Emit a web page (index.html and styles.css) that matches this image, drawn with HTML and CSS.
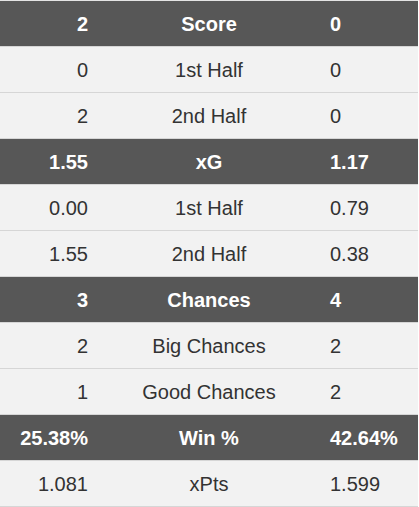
FILE: index.html
```html
<!DOCTYPE html>
<html>
<head>
<meta charset="utf-8">
<link rel="stylesheet" href="styles.css">
</head>
<body>
<table class="stats">
  <tr class="head"><td class="l">2</td><td class="m">Score</td><td class="r">0</td></tr>
  <tr class="row"><td class="l">0</td><td class="m">1st Half</td><td class="r">0</td></tr>
  <tr class="row"><td class="l">2</td><td class="m">2nd Half</td><td class="r">0</td></tr>
  <tr class="head"><td class="l">1.55</td><td class="m">xG</td><td class="r">1.17</td></tr>
  <tr class="row"><td class="l">0.00</td><td class="m">1st Half</td><td class="r">0.79</td></tr>
  <tr class="row"><td class="l">1.55</td><td class="m">2nd Half</td><td class="r">0.38</td></tr>
  <tr class="head"><td class="l">3</td><td class="m">Chances</td><td class="r">4</td></tr>
  <tr class="row"><td class="l">2</td><td class="m">Big Chances</td><td class="r">2</td></tr>
  <tr class="row"><td class="l">1</td><td class="m">Good Chances</td><td class="r">2</td></tr>
  <tr class="head"><td class="l">25.38%</td><td class="m">Win %</td><td class="r">42.64%</td></tr>
  <tr class="row"><td class="l">1.081</td><td class="m">xPts</td><td class="r">1.599</td></tr>
</table>
</body>
</html>
```
FILE: styles.css
```css
html, body {
  margin: 0;
  padding: 0;
  background: #ffffff;
}
.stats {
  width: 418px;
  border-collapse: collapse;
  border-top: 1px solid #e4e4e4;
  font-family: "Liberation Sans", Arial, sans-serif;
  font-size: 20px;
  table-layout: fixed;
}
.stats td {
  height: 44px;
  padding: 1px 0 0 0;
  border-bottom: 1px solid #d6d6d6;
  vertical-align: middle;
  white-space: nowrap;
}
.stats .l {
  width: 100px;
  text-align: right;
  padding-right: 12px;
  box-sizing: border-box;
}
.stats .m {
  text-align: center;
}
.stats .r {
  width: 100px;
  text-align: left;
  padding-left: 12px;
  box-sizing: border-box;
}
.head td {
  background: #575757;
  color: #ffffff;
  font-weight: bold;
}
.row td {
  background: #f2f2f2;
  color: #333333;
}
```
